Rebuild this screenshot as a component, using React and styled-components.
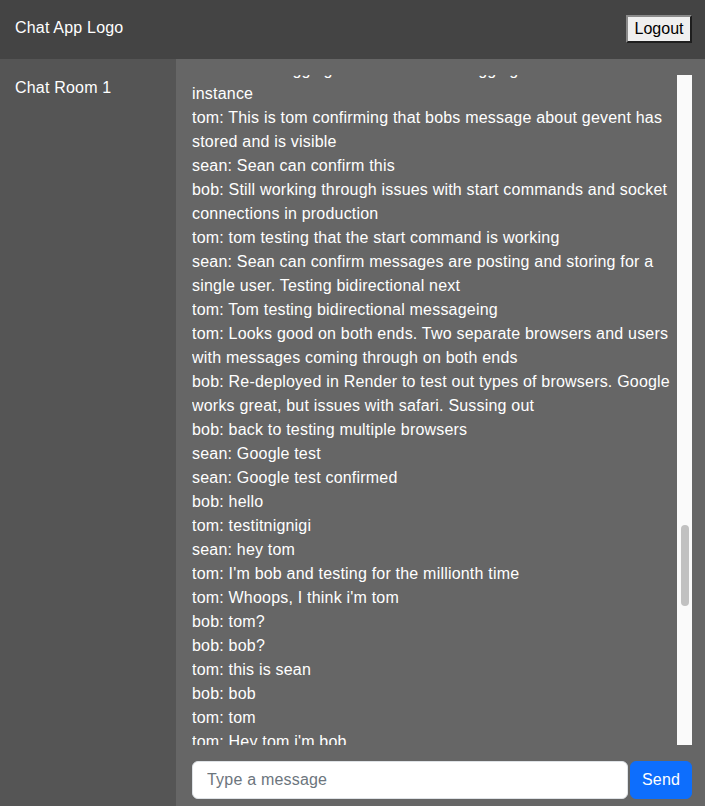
import React from "react";
import styled, { createGlobalStyle } from "styled-components";

const messages = [
  "bob: Added logging to the server and logging for the Render instance",
  "tom: This is tom confirming that bobs message about gevent has stored and is visible",
  "sean: Sean can confirm this",
  "bob: Still working through issues with start commands and socket connections in production",
  "tom: tom testing that the start command is working",
  "sean: Sean can confirm messages are posting and storing for a single user. Testing bidirectional next",
  "tom: Tom testing bidirectional messageing",
  "tom: Looks good on both ends. Two separate browsers and users with messages coming through on both ends",
  "bob: Re-deployed in Render to test out types of browsers. Google works great, but issues with safari. Sussing out",
  "bob: back to testing multiple browsers",
  "sean: Google test",
  "sean: Google test confirmed",
  "bob: hello",
  "tom: testitnignigi",
  "sean: hey tom",
  "tom: I'm bob and testing for the millionth time",
  "tom: Whoops, I think i'm tom",
  "bob: tom?",
  "bob: bob?",
  "tom: this is sean",
  "bob: bob",
  "tom: tom",
  "tom: Hey tom i'm bob",
];

const thumb = { top: 450, height: 81 };

const App = () => {
  return (
    <>
      <GlobalStyle />
      <Page>
        <Header>
          <Logo>Chat App Logo</Logo>
          <LogoutButton>Logout</LogoutButton>
        </Header>
        <Body>
          <Sidebar>
            <RoomItem>Chat Room 1</RoomItem>
          </Sidebar>
          <Main>
            <MessagePane>
              <MessageViewport>
                <MessageList>
                  {messages.map((m, i) => (
                    <Message key={i}>{m}</Message>
                  ))}
                </MessageList>
              </MessageViewport>
              <ScrollTrack>
                <ScrollThumb style={{ top: thumb.top, height: thumb.height }} />
              </ScrollTrack>
            </MessagePane>
            <Form onSubmit={(e) => e.preventDefault()}>
              <Input placeholder="Type a message" />
              <SendButton type="submit">Send</SendButton>
            </Form>
          </Main>
        </Body>
      </Page>
    </>
  );
};

export default App;

const GlobalStyle = createGlobalStyle`
  html, body {
    margin: 0;
    padding: 0;
    height: 100%;
  }
  body {
    font-family: "Liberation Sans", Arial, Helvetica, sans-serif;
    font-size: 16px;
    overflow: hidden;
  }
  #root {
    height: 100%;
  }
`;

const Page = styled.div`
  height: 806px;
  display: flex;
  flex-direction: column;
  color: #fff;
`;

const Header = styled.header`
  height: 59px;
  flex-shrink: 0;
  background: #444444;
  display: flex;
  align-items: center;
  justify-content: space-between;
  padding: 0 13px 0 15px;
  box-sizing: border-box;
`;

const Logo = styled.div`
  font-size: 16px;
  letter-spacing: 0.2px;
  margin-top: -3px;
`;

const LogoutButton = styled.button`
  font-family: "Liberation Sans", Arial, sans-serif;
  font-size: 16px;
  color: #000;
  background: #efefef;
  border: 2px solid;
  border-color: #8a8a8a #1e1e1e #1e1e1e #8a8a8a;
  height: 28px;
  width: 66px;
  padding: 0;
  margin-top: -1px;
  cursor: pointer;
`;

const Body = styled.div`
  flex: 1;
  display: flex;
  min-height: 0;
`;

const Sidebar = styled.aside`
  width: 176px;
  flex-shrink: 0;
  background: #555555;
  padding: 17px 15px;
  box-sizing: border-box;
`;

const RoomItem = styled.div`
  font-size: 16px;
  line-height: 24px;
  letter-spacing: 0.2px;
`;

const Main = styled.main`
  flex: 1;
  background: #666666;
  display: flex;
  flex-direction: column;
  padding: 16px 13px 7px 16px;
  box-sizing: border-box;
  min-width: 0;
`;

const MessagePane = styled.div`
  flex: 1;
  min-height: 0;
  display: flex;
`;

const MessageViewport = styled.div`
  flex: 1;
  min-width: 0;
  overflow: hidden;
`;

const MessageList = styled.div`
  margin-top: -17px;
`;

const Message = styled.div`
  font-size: 16px;
  line-height: 24px;
  letter-spacing: 0.2px;
  color: #fff;
`;

const ScrollTrack = styled.div`
  width: 15px;
  flex-shrink: 0;
  background: #fafafa;
  position: relative;
`;

const ScrollThumb = styled.div`
  position: absolute;
  left: 4px;
  width: 8px;
  border-radius: 4px;
  background: #c1c1c1;
`;

const Form = styled.form`
  display: flex;
  gap: 2px;
  margin-top: 16px;
  height: 38px;
  flex-shrink: 0;
`;

const Input = styled.input`
  flex: 1;
  min-width: 0;
  height: 38px;
  box-sizing: border-box;
  border: 1px solid #dee2e6;
  border-radius: 6px;
  padding: 6px 14px;
  font-family: "Liberation Sans", Arial, sans-serif;
  font-size: 16px;
  letter-spacing: 0.2px;
  color: #212529;
  background: #fff;
  outline: none;

  &::placeholder {
    color: #6c757d;
  }
`;

const SendButton = styled.button`
  width: 62px;
  height: 38px;
  border: 1px solid #0d6efd;
  border-radius: 6px;
  background: #0d6efd;
  color: #fff;
  font-family: "Liberation Sans", Arial, sans-serif;
  font-size: 16px;
  letter-spacing: 0.2px;
  padding: 0;
  cursor: pointer;
`;
